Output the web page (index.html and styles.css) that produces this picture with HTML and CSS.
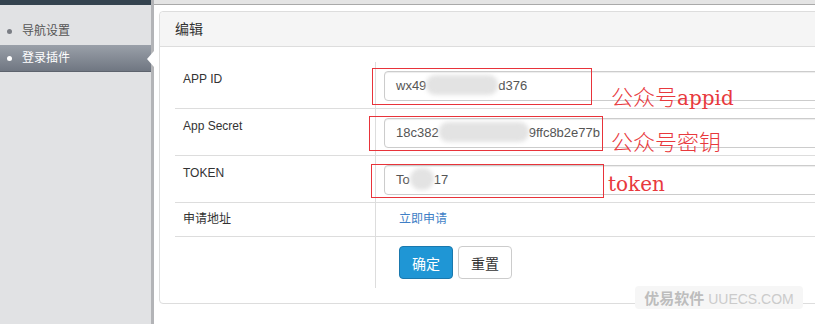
FILE: index.html
```html
<!DOCTYPE html>
<html lang="zh-CN">
<head>
    <meta charset="UTF-8">
    <meta name="viewport" content="width=device-width, initial-scale=1.0">
    <title>登录插件 - 编辑</title>
    <link rel="stylesheet" href="styles.css">
</head>
<body>
    <div class="layout">
        <aside class="sidebar">
            <div class="sidebar-top"></div>
            <ul class="nav">
                <li class="nav-item">导航设置</li>
                <li class="nav-item active">登录插件</li>
            </ul>
        </aside>

        <main class="main">
            <div class="main-top"></div>

            <div class="panel">
                <div class="panel-heading">编辑</div>
                <div class="panel-body">
                    <div class="form-row input-row">
                        <div class="form-label">APP ID</div>
                        <div class="form-field">
                            <div class="input">wx49<span class="mask mask-id"></span>d376</div>
                        </div>
                    </div>
                    <div class="form-row input-row">
                        <div class="form-label">App Secret</div>
                        <div class="form-field">
                            <div class="input">18c382<span class="mask mask-secret"></span>9ffc8b2e77b</div>
                        </div>
                    </div>
                    <div class="form-row input-row">
                        <div class="form-label">TOKEN</div>
                        <div class="form-field">
                            <div class="input">To<span class="mask mask-token"></span>17</div>
                        </div>
                    </div>
                    <div class="form-row">
                        <div class="form-label">申请地址</div>
                        <div class="form-field indent">
                            <a class="link" href="#">立即申请</a>
                        </div>
                    </div>
                    <div class="form-row last">
                        <div class="form-label"></div>
                        <div class="form-field indent actions">
                            <button type="submit" class="btn btn-primary">确定</button>
                            <button type="reset" class="btn btn-default">重置</button>
                        </div>
                    </div>
                </div>
            </div>

            <!-- red marks drawn over the screenshot -->
            <div class="mark mark-id"></div>
            <div class="mark mark-secret"></div>
            <div class="mark mark-token"></div>
            <div class="note note-id"><span class="cjk">公众号</span>appid</div>
            <div class="note note-secret"><span class="cjk">公众号密钥</span></div>
            <div class="note note-token">token</div>

            <div class="watermark"><strong>优易软件</strong> UUECS.COM</div>
        </main>
    </div>
</body>
</html>
```

FILE: styles.css
```css
body {
    margin: 0;
    padding: 0;
    height: 324px;
    overflow: hidden;
    background-color: #fff;
    font-family: "Liberation Sans", Arial, "Noto Sans CJK SC", sans-serif;
    font-size: 12px;
    color: #333;
}

.layout {
    display: flex;
    height: 324px;
}

/* Sidebar */
.sidebar {
    width: 151px;
    flex-shrink: 0;
    background-color: #e1e2e4;
    border-right: 3px solid #b3b4b7;
}

.sidebar-top {
    height: 5px;
    background-color: #34434f;
}

.nav {
    list-style: none;
    margin: 0;
    padding: 13px 0 0;
}

.nav-item {
    position: relative;
    height: 27px;
    line-height: 27px;
    padding-left: 22px;
    color: #555;
}

.nav-item::before {
    content: "";
    position: absolute;
    left: 7px;
    top: 11px;
    width: 5px;
    height: 5px;
    border-radius: 50%;
    background-color: #7a7d84;
}

.nav-item.active {
    color: #fff;
    background: linear-gradient(#9aa0a9, #6e7580);
    box-shadow: inset 0 -1px 0 #5d636d;
}

.nav-item.active::before {
    background-color: #fff;
}

.nav-item.active::after {
    content: "";
    position: absolute;
    right: -3px;
    top: 6px;
    border-top: 8px solid transparent;
    border-bottom: 8px solid transparent;
    border-right: 7px solid #fff;
}

/* Main */
.main {
    position: relative;
    flex: 1;
    min-width: 0;
}

.main-top {
    height: 4px;
    background-color: #e4e4e4;
    border-bottom: 1px solid #a9a9a9;
}

.panel {
    width: 700px;
    margin: 6px 0 0 5px;
    border: 1px solid #ddd;
    border-radius: 4px;
    background-color: #fff;
}

.panel-heading {
    height: 34px;
    line-height: 34px;
    padding: 0 15px;
    font-size: 14px;
    color: #333;
    background-color: #f5f5f5;
    border-bottom: 1px solid #ddd;
    border-radius: 4px 4px 0 0;
}

.panel-body {
    padding: 15px;
}

.form-row {
    display: grid;
    grid-template-columns: 201px 1fr;
    border-bottom: 1px solid #ddd;
}

.form-row.last {
    border-bottom: none;
}

.form-label {
    padding: 8px;
    line-height: 17px;
    border-right: 1px solid #ddd;
}

.form-field {
    padding: 8px;
    line-height: 17px;
}

.input-row .form-label,
.input-row .form-field {
    padding-top: 9px;
    padding-bottom: 7px;
}

.form-field.indent {
    padding-left: 23px;
}

.form-field.actions {
    padding-top: 9px;
    padding-bottom: 9px;
    display: flex;
    gap: 5px;
}

.input {
    box-sizing: border-box;
    height: 30px;
    line-height: 28px;
    padding: 0 11px;
    border: 1px solid #ccc;
    border-radius: 4px;
    box-shadow: inset 0 1px 1px rgba(0, 0, 0, 0.075);
    font-size: 13px;
    color: #555;
    white-space: nowrap;
    overflow: hidden;
}

.mask {
    display: inline-block;
    vertical-align: middle;
    height: 20px;
    margin-top: -3px;
    background-color: #e3e3e3;
    border-radius: 9px;
    filter: blur(2px);
}

.mask.mask-id { width: 72px; }
.mask.mask-secret { width: 90px; }
.mask.mask-token { width: 24px; height: 22px; border-radius: 11px; }

.link {
    color: #3f7fc6;
    text-decoration: none;
}

.btn {
    height: 33px;
    padding: 0 12px;
    font-family: "Noto Sans CJK SC", sans-serif;
    font-size: 14px;
    border-radius: 4px;
    cursor: pointer;
}

.btn-primary {
    color: #fff;
    background-color: #1f96d5;
    border: 1px solid #1a78ad;
}

.btn-default {
    color: #333;
    background-color: #fff;
    border: 1px solid #ccc;
}

/* Red annotations */
.mark {
    position: absolute;
    border: 1px solid #e8333a;
}

.mark.mark-id { left: 218px; top: 68px; width: 218px; height: 35px; }
.mark.mark-secret { left: 215px; top: 116px; width: 232px; height: 33px; }
.mark.mark-token { left: 217px; top: 164px; width: 231px; height: 32px; }

.note {
    position: absolute;
    line-height: 26px;
    font-family: "DejaVu Serif", "Noto Sans CJK SC", serif;
    font-size: 20px;
    color: #e8393d;
    white-space: nowrap;
}

.note .cjk {
    font-family: "Noto Sans CJK SC", sans-serif;
    font-size: 22px;
    font-weight: 300;
}

.note.note-id { left: 457px; top: 82px; }
.note.note-secret { left: 457px; top: 127px; }
.note.note-token { left: 454px; top: 171px; }

.watermark {
    position: absolute;
    left: 481px;
    top: 286px;
    width: 168px;
    height: 23px;
    line-height: 23px;
    text-align: center;
    border-radius: 4px;
    background-color: #f6f6f6;
    font-size: 14px;
    color: #cbcbcb;
}

.watermark strong {
    font-family: "Noto Sans CJK SC", sans-serif;
    font-size: 15px;
    color: #bdbdbd;
}
```
